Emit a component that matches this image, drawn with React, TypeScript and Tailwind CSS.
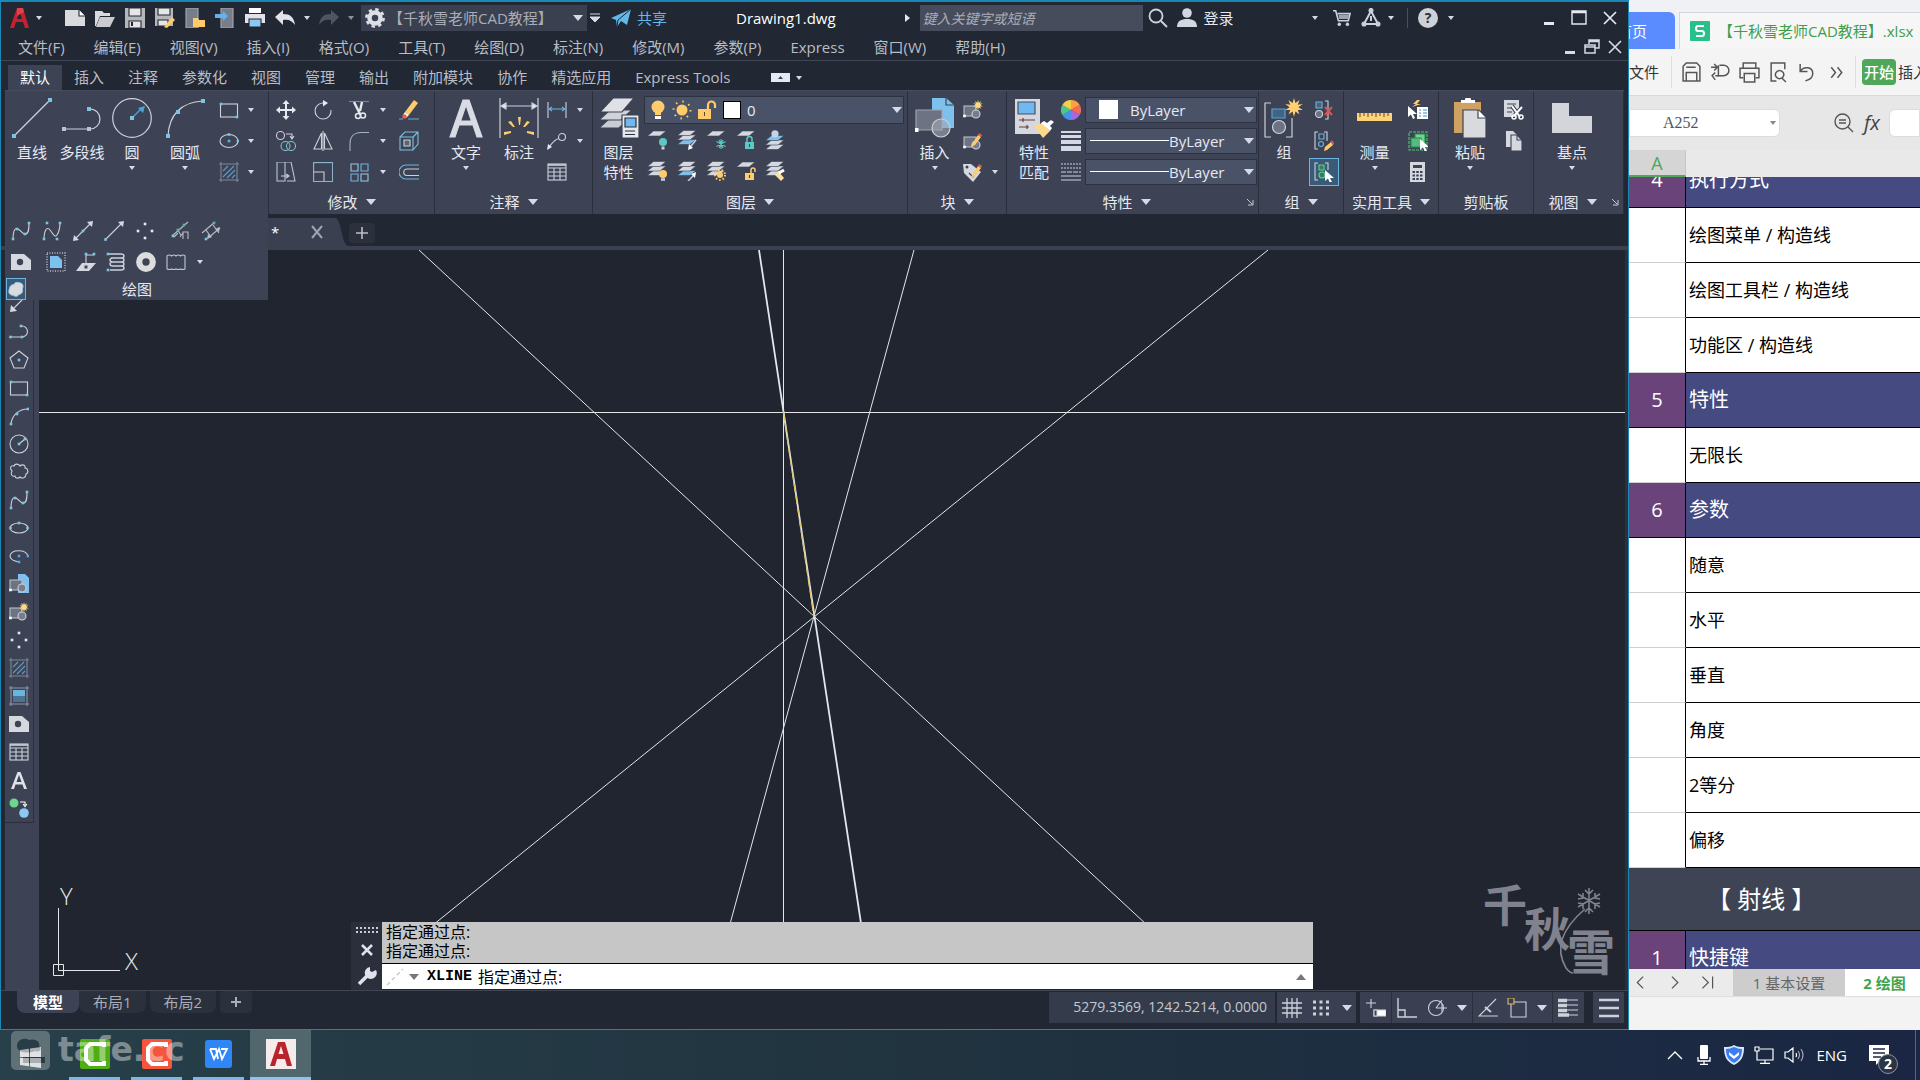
import type { ReactNode } from 'react';

interface IconProps {
    children: ReactNode;
    size?: number;
}

// Small toolbar icon, drawn on a 20 unit grid
function Icon({ children, size = 20 }: IconProps) {
    return (
        <svg width={size} height={size} viewBox="0 0 20 20" fill="none" stroke="#cdd1db" strokeWidth="1.1" className="shrink-0">
            {children}
        </svg>
    );
}

// Large ribbon icon, drawn on a 40 unit grid
function BigIcon({ children }: { children: ReactNode }) {
    return (
        <svg width="40" height="40" viewBox="0 0 40 40" fill="none" stroke="#cdd1db" strokeWidth="1.2" className="shrink-0">
            {children}
        </svg>
    );
}

function Caret({ wide = false }: { wide?: boolean }) {
    return wide ? (
        <svg width="10" height="6" viewBox="0 0 10 6" className="shrink-0">
            <path d="M0 0h10L5 6z" fill="#d6dae6" />
        </svg>
    ) : (
        <svg width="8" height="4" viewBox="0 0 8 4" className="shrink-0">
            <path d="M1 0h6L4 4z" fill="#d6dae6" />
        </svg>
    );
}

function Dot({ x, y, c = '#7cc4e0', r = 1.3 }: { x: number; y: number; c?: string; r?: number }) {
    return <rect x={x - r} y={y - r} width={r * 2} height={r * 2} fill={c} stroke="none" />;
}

const SUN = 'M10 0l1.3 4.6L15 1.8l-1.6 4.4L18 5.5l-4 2.9L18 11l-4.6-.2L15 15l-3.7-2.7L10 17l-1.3-4.7L5 15l1.6-4.2L2 11l4-2.6-4-2.9 4.6.7L5 1.8l3.7 2.8z';
const CURSOR = 'M0 0v11l3-2.5L5 13l2-1-2-4h4z';

const pencil = (
    <g stroke="none">
        <path d="M9 13l6-9 3 2-6 8-4 2z" fill="#ffcb6b" />
        <path d="M15 4l1-2 3 2-1 2z" fill="#e8604c" />
    </g>
);

const blockBase = (
    <g>
        <rect x="1" y="6" width="12" height="10" fill="#6d7382" stroke="#b9bdc8" />
        <circle cx="13" cy="14" r="4" fill="#777d8c" />
        <Dot x={1.5} y={16} c="#fff" />
    </g>
);

const hatchBox = (
    <g>
        <path d="M2 0v20M18 0v20M0 2h20M0 18h20" stroke="#7f8696" />
        <path d="M4 9l5-5M4 15L15 4M8 16l8-8M13 16l3-3" stroke="#5c9dc6" />
    </g>
);

const sheet = (y: number, fill = '#d5d8de') => <path key={y} d={`M6.500 ${y}h12.500l-6 5H0.500z`} fill={fill} stroke="#3d4354" strokeWidth="0.6" />;

const stack = (bottom = '#d5d8de', top = '#d5d8de') => (
    <g>
        {sheet(9.5, bottom)}
        {sheet(5)}
        {sheet(0.5, top)}
    </g>
);

const lock = (color: string, open = false) => (
    <g>
        <rect x="9" y="12" width="9" height="7" fill={color} stroke="none" />
        <path d={open ? 'M15 12V9a2 2 0 0 1 4 0v2' : 'M11 12V9a2.500 2.500 0 0 1 5 0v3'} stroke={color} strokeWidth="1.5" />
        <path d="M13.500 14v3" stroke="#3d4354" />
    </g>
);

const icons = {
    rect: (
        <>
            <rect x="1.5" y="4" width="17" height="13" />
            <Dot x={2} y={4} />
            <Dot x={18} y={17} />
        </>
    ),
    ellipse: (
        <>
            <ellipse cx="10" cy="10" rx="9" ry="6.500" />
            <Dot x={10} y={10} c="#57b7d8" />
            <Dot x={10} y={3.5} />
            <Dot x={19} y={10} />
        </>
    ),
    hatch: hatchBox,
    move: <path d="M10 0l3.500 4H11v5h5V6.500L20 10l-4 3.500V11h-5v5h2.500L10 20l-3.500-4H9v-5H4v2.500L0 10l4-3.500V9h5V4H6.500z" fill="#e6e9f0" stroke="none" />,
    rotate: (
        <>
            <path d="M12 3.200A8 8 0 1 0 18 10" />
            <path d="M10 0l5 3-5 3.500z" fill="#e6e9f0" stroke="none" />
        </>
    ),
    trim: (
        <>
            <path d="M0 1.500h20" stroke="#7f8696" />
            <path d="M5 2l6 12M13 2L11 11" stroke="#e6e9f0" strokeWidth="2.4" />
            <circle cx="9" cy="16" r="2.500" stroke="#e6e9f0" strokeWidth="1.500" />
            <circle cx="14" cy="15.500" r="2.500" stroke="#e6e9f0" strokeWidth="1.500" />
        </>
    ),
    erase: (
        <>
            <path d="M6 12L15 0l4 3-9 12z" fill="#ffcb6b" stroke="none" />
            <path d="M6 12l-2 3 3 3 3-3z" fill="#fff" stroke="none" />
            <circle cx="5.500" cy="16.500" r="2.300" fill="#e8604c" stroke="none" />
            <path d="M0 19h4M9 19h11" stroke="#68aed6" />
        </>
    ),
    copy: (
        <>
            <circle cx="4.500" cy="4.500" r="4" />
            <circle cx="9.500" cy="15" r="4.500" stroke="#7cbfd0" />
            <circle cx="15" cy="15" r="4.500" stroke="#7cbfd0" />
            <path d="M10 3h6v4M14 5l2 3 2-3" />
        </>
    ),
    mirror: <path d="M8.500 2v16H1zM11.500 2v16H19zM10 0v20" />,
    fillet: <path d="M1 20v-7C1 5 6 1.500 12 1.500h8" stroke="#9fb5c4" />,
    box: (
        <>
            <path d="M1 6h13v13H1zM1 6l5-5h13v12l-5 6M14 6l5-5" stroke="#7cbfe0" />
            <path d="M5 9h6v6H5z" fill="#5a6474" />
        </>
    ),
    stretch: (
        <>
            <path d="M1 0h8v19H1zM9 0h6l4 19h-8" stroke="#b9c8d4" />
            <path d="M5 14h7M10 12l3 2-3 2" />
        </>
    ),
    scale: (
        <>
            <rect x="0.6" y="0.6" width="19" height="19" stroke="#8fb9cf" />
            <path d="M1 10h10v9" />
        </>
    ),
    array: (
        <>
            <path d="M2 2h7v7H2zM12 12h7v7h-7z" stroke="#9cc8dc" />
            <path d="M12 2h7v7h-7zM2 12h7v7H2z" stroke="#6cb4e0" />
        </>
    ),
    offset: (
        <>
            <path d="M20 3H7a7 7 0 0 0 0 14h13" stroke="#6cb4e0" />
            <path d="M20 7H8a3 3 0 0 0 0 6.500h12" />
        </>
    ),
    dimLinear: (
        <>
            <path d="M1 2v16M19 2v16" />
            <path d="M2 9h16M5 7L2 9l3 2M15 7l3 2-3 2" stroke="#6cb4e0" />
        </>
    ),
    leader: (
        <>
            <circle cx="15" cy="6" r="3.500" />
            <path d="M12 7.500C8 8 6 11 2 16" />
            <path d="M0 19l1-6 4 3z" fill="#e6e9f0" stroke="none" />
        </>
    ),
    table: (
        <>
            <rect x="1" y="2" width="18" height="16" />
            <path d="M1 6h18M1 10h18M1 14h18M7 6v12M13 6v12" />
            <path d="M1 3h18" strokeWidth="1.600" />
        </>
    ),
    layerOff: (
        <>
            {sheet(1)}
            <circle cx="16" cy="12" r="4" fill="#5cc8c4" stroke="none" />
            <path d="M14.500 18h3" strokeWidth="3" />
        </>
    ),
    layerIso: (
        <>
            {stack('#7fc1ee')}
            <path d="M19 10l-5 6" strokeWidth="1.500" />
            <path d="M11 20l1-6 4 4z" fill="#fff" stroke="none" />
        </>
    ),
    layerFreeze: (
        <>
            {sheet(1)}
            <path d="M15 9v10M10.500 11.500l9 5M19.500 11.500l-9 5M13 10l4 8M17 10l-4 8" stroke="#5cc8c4" />
        </>
    ),
    layerLock: (
        <>
            {sheet(1)}
            {lock('#5cc8c4')}
        </>
    ),
    layerCurrent: (
        <>
            {sheet(14.5)}
            {sheet(10)}
            {sheet(5.5, '#7fc1ee')}
            <circle cx="10" cy="3.800" r="3.600" fill="#c3d2e4" stroke="none" />
        </>
    ),
    layerOn: (
        <>
            {stack()}
            <circle cx="16" cy="13" r="4" fill="#ffcb6b" stroke="none" />
            <path d="M14 18.500h4" strokeWidth="2.500" />
        </>
    ),
    layerUniso: (
        <>
            {stack('#7fc1ee')}
            <path d="M11 20l7-7" strokeWidth="1.500" />
            <path d="M19 11l-1 6-4-4z" fill="#fff" stroke="none" />
        </>
    ),
    layerThaw: (
        <>
            {stack()}
            <circle cx="14" cy="14" r="3" fill="#ffcb6b" stroke="none" />
            <circle cx="14" cy="14" r="5" stroke="#ffcb6b" strokeWidth="2" strokeDasharray="1.500 2" />
        </>
    ),
    layerUnlock: (
        <>
            {sheet(1)}
            {lock('#ffcb6b', true)}
        </>
    ),
    layerMatch: (
        <>
            {stack()}
            <path d="M10 14l4-3 5 6-3 3z" fill="#ffe0a0" stroke="none" />
            <path d="M14 12l5-3" stroke="#fff" strokeWidth="3" />
        </>
    ),
    blockNew: (
        <>
            {blockBase}
            <g transform="translate(9 0) scale(.6)">
                <path d={SUN} fill="#ffd980" stroke="none" />
            </g>
        </>
    ),
    blockEdit: (
        <>
            {blockBase}
            {pencil}
        </>
    ),
    attr: (
        <>
            <path d="M0 2l8 0 10 8-8 10L1 11z" fill="#d5d8de" stroke="none" />
            <circle cx="4" cy="5" r="1.500" fill="#3d4354" stroke="none" />
            <path d="M6 11l4 4 4-6" stroke="#3d4354" />
            {pencil}
        </>
    ),
    lineWeight: (
        <g stroke="none" fill="#d5d8e4">
            <rect y="0" width="20" height="2" />
            <rect y="4" width="20" height="3" />
            <rect y="9" width="20" height="4" />
            <rect y="15" width="20" height="5" />
        </g>
    ),
    lineType: (
        <g>
            <path d="M0 2h20M0 6h20" strokeDasharray="2 1" />
            <path d="M0 10h20" strokeDasharray="5 1" />
            <path d="M0 14h20M0 18h20" />
        </g>
    ),
    ungroup: (
        <>
            <path d="M2 2h6v6H2z" stroke="#6cb4e0" fill="#47627a" />
            <circle cx="5" cy="14" r="3.500" fill="#6d7382" />
            <path d="M11 1h3v18h-3" />
            <path d="M11 7l7 8M18 7l-7 8" stroke="#e05252" strokeWidth="2" />
        </>
    ),
    groupEdit: (
        <>
            <path d="M4 1H1v17h3M10 1h3v9" />
            <path d="M5 3h5v5H5z" stroke="#6cb4e0" />
            <circle cx="7" cy="13" r="2.500" stroke="#6cb4e0" />
            <path d="M10 20l1-4 6-5 2 3-6 5z" fill="#ffcb6b" stroke="none" />
            <path d="M17 10l3 3" stroke="#e05252" strokeWidth="2" />
        </>
    ),
    groupSelect: (
        <>
            <path d="M4 1H1v17h3M11 1h3v7" />
            <path d="M5 3h5v5H5z" stroke="#5fd08c" fill="#3b7a5a" />
            <circle cx="8" cy="13" r="3" stroke="#5fd08c" fill="#3b7a5a" />
            <path d={CURSOR} transform="translate(11 8)" fill="#fff" stroke="none" />
        </>
    ),
    quickSelect: (
        <>
            <path d="M9 7h11v12H9z" fill="#fff" stroke="none" />
            <path d="M11 10h2M15 10h4M11 13h2M15 13h4M11 16h2M15 16h4" stroke="#3d8fd0" />
            <path d="M9 0L5 4h3L4 7l9-3h-4l3-4z" fill="#ffcb6b" stroke="none" />
            <path d={CURSOR} transform="translate(0 6)" fill="#fff" stroke="none" />
        </>
    ),
    selectAll: (
        <>
            <rect x="1" y="1" width="18" height="18" stroke="#4cc878" strokeDasharray="3 1" />
            <path d="M7 3h10v9H7z" fill="#6fd48f" stroke="#2e8a54" />
            <path d="M3 7h10v9H3z" fill="#55bd7a" stroke="#2e8a54" />
            <path d={CURSOR} transform="translate(12 8)" fill="#fff" stroke="none" />
        </>
    ),
    calc: (
        <>
            <rect x="2" y="0" width="15" height="20" fill="#d5d8de" stroke="none" />
            <rect x="5" y="3" width="9" height="3" fill="#3d4354" stroke="none" />
            <path d="M4.500 10h10M4.500 13.500h10M4.500 17h10" stroke="#3d4354" strokeWidth="2" strokeDasharray="2.500 1.250" />
        </>
    ),
    cut: (
        <>
            <path d="M0 0h15v17H0z" fill="#d5d8de" stroke="none" />
            <path d="M3 4h9M3 8h5M3 12h5" stroke="#3d4354" />
            <path d="M8 6l8 11M18 7L10 16" stroke="#3d4354" strokeWidth="4" />
            <path d="M8 6l8 11M18 7L10 16" stroke="#fff" strokeWidth="2" />
            <circle cx="10" cy="17" r="2" stroke="#fff" strokeWidth="1.500" />
            <circle cx="17" cy="17" r="2" stroke="#fff" strokeWidth="1.500" />
        </>
    ),
    copyClip: (
        <>
            <path d="M2 0h7l4 4v12H2z" fill="#d5d8de" stroke="none" />
            <path d="M7 4h6l5 5v11H7z" fill="#d5d8de" stroke="#3d4354" />
            <path d="M13 4v5h5" stroke="#3d4354" />
        </>
    ),
    spline: (
        <>
            <path d="M2 19C2 12 3 6 7 8s5 6 8 5 3-6 3-12" />
            <Dot x={2} y={18} />
            <Dot x={6} y={8} />
            <Dot x={14} y={13} />
            <Dot x={18} y={2} />
        </>
    ),
    splineCv: (
        <>
            <path d="M2 19C2 9 5 5 8 9s5 8 7 5 3-8 3-13" />
            <Dot x={2} y={18} />
            <Dot x={5} y={2} />
            <Dot x={15} y={18} />
            <Dot x={18} y={2} />
        </>
    ),
    xline: (
        <>
            <path d="M2 18L18 2" />
            <path d="M0 20l1-6 5 5zM20 0l-1 6-5-5z" fill="#d5d8e0" stroke="none" />
            <Dot x={10} y={10} />
        </>
    ),
    ray: (
        <>
            <path d="M1 19L17 3" />
            <path d="M20 0l-1 6-5-5z" fill="#d5d8e0" stroke="none" />
            <Dot x={1.5} y={18.5} />
        </>
    ),
    points: (
        <>
            <Dot x={10} y={3} c="#e6e9f0" />
            <Dot x={3} y={10} c="#e6e9f0" />
            <Dot x={17} y={10} c="#e6e9f0" />
            <Dot x={10} y={17} c="#e6e9f0" />
        </>
    ),
    divide: (
        <>
            <path d="M1 15L17 1M6 8l4 6M3 16l4-4M12 18v-7h5v7M9 16l3-4" stroke="#b9bdc8" />
            <Dot x={7} y={9} c="#4fb3a8" />
            <Dot x={13} y={4} c="#4fb3a8" />
            <Dot x={2} y={15} />
        </>
    ),
    measure: (
        <>
            <path d="M1 12L14 1M7 17L19 7M5 9l5 7M12 4l6 8" stroke="#b9bdc8" />
            <path d="M6 18l1-5 4 3zM19 6l-1 5-4-3z" fill="#b9bdc8" stroke="none" />
            <Dot x={5} y={18} />
            <Dot x={13} y={2} c="#4fb3a8" />
        </>
    ),
    region: (
        <>
            <path d="M0 2h13l7 6v10H0z" fill="#d5d8de" stroke="none" />
            <circle cx="9" cy="10" r="3.200" fill="#3d4354" stroke="none" />
        </>
    ),
    wipeout: (
        <>
            <rect x="1" y="1" width="18" height="18" strokeWidth="2" strokeDasharray="1 1.500" stroke="#9aa0ae" />
            <path d="M4 4h8l4 4v8H4z" fill="#7fc1ee" stroke="none" />
        </>
    ),
    plane: (
        <>
            <path d="M6 11h14l-7 8H0z" fill="#d5d8de" stroke="none" />
            <path d="M10 15V3h8" />
            <Dot x={10} y={2} />
            <Dot x={18} y={2} />
            <rect x="8" y="13" width="4" height="4" fill="#3d4354" />
        </>
    ),
    helix: (
        <>
            <g strokeWidth="1.400">
                <path d="M3 2h12c4 0 4 4 0 4H5M7 6c-4 0-4 4 0 4M5 6h10c4 0 4 4 0 4H6M7 10c-4 0-4 4 0 4M6 10h9c4 0 4 4 0 4H7M4 18h11c4 0 4-4 0-4" />
            </g>
            <Dot x={2} y={2} />
            <Dot x={2} y={18} />
        </>
    ),
    donut: <circle cx="10" cy="10" r="6.800" stroke="#dcdcdc" strokeWidth="6.200" />,
    cloudRect: <path d="M1 4q2.500-2 4.500 0 2.500-2 4.500 0 2.500-2 4.500 0 2.500-2 4.500 0v13q-2 1-4.500 0-2 1-4.500 0-2 1-4.500 0-2 1-4.500 0z" stroke="#b9c8d4" />,
    blob: <path d="M3 9c-2 4-1 8 4 8 2 2 6 1 6-1 4 0 5-4 4-6 2-4 0-7-4-7-2-1-5 0-5 2-3 0-5 2-5 4z" fill="#d9dbe0" stroke="#a9c4d8" />,
    lineSeg: (
        <>
            <path d="M17 2L4 15" />
            <path d="M1 18l1-7 6 6z" fill="#d5d8e0" stroke="none" />
            <Dot x={18} y={1.5} />
        </>
    ),
    pline: (
        <>
            <path d="M1 15h12a5 5 0 0 0 0-11" />
            <Dot x={1.5} y={15} />
            <Dot x={13} y={15} />
            <Dot x={12} y={4} />
        </>
    ),
    polygon: (
        <>
            <path d="M10 1l9 7-4 10H5L1 8z" />
            <Dot x={10} y={10} />
        </>
    ),
    arc: (
        <>
            <path d="M2 18C3 9 10 3 19 3" />
            <Dot x={2} y={18} />
            <Dot x={8} y={8} />
            <Dot x={19} y={3} />
        </>
    ),
    circle: (
        <>
            <circle cx="10" cy="10" r="9" />
            <path d="M10 10l6-5" />
            <Dot x={10} y={10} />
            <Dot x={16} y={5} />
        </>
    ),
    cloud: <path d="M3 9C0 6 2 3 5 4c1-3 5-2 6 0 2-2 6-1 5 2 3 0 4 5 1 6 0 4-4 5-6 3-2 2-5 1-5-1-3 1-5-2-3-5z" />,
    ellipseSmall: (
        <>
            <ellipse cx="10" cy="10" rx="9" ry="5" />
            <Dot x={1.5} y={10} />
            <Dot x={18.5} y={10} />
            <Dot x={10} y={5} />
        </>
    ),
    ellipseArc: (
        <>
            <path d="M10 16C4 15 1 13 1 10c1-7 16-7 18 0" />
            <Dot x={10} y={10} c="#4ba7e8" />
            <Dot x={19} y={10} c="#4ba7e8" />
            <Dot x={10} y={16} c="#4ba7e8" />
        </>
    ),
    insert: (
        <>
            <path d="M9 0h7l4 4v15H9z" fill="#7fc1ee" stroke="none" />
            {blockBase}
        </>
    ),
    gradient: (
        <>
            <path d="M2 0v20M18 0v20M0 2h20M0 18h20" stroke="#8e95a5" />
            <path d="M4 4h12v6H4z" fill="#6cb4e0" stroke="none" />
            <path d="M4 10h12v6H4z" fill="#4a7592" stroke="none" />
        </>
    ),
    addSel: (
        <>
            <circle cx="5" cy="5" r="4.500" fill="#6fd48f" stroke="none" />
            <circle cx="15" cy="15" r="4.800" fill="#8cc8f4" stroke="none" />
            <path d="M11 4h5v3M14 6l2 2.500L18 6" stroke="#fff" />
        </>
    ),
};

type IconName = keyof typeof icons;

function Tool({ name, label, active = false }: { name: IconName; label?: string; active?: boolean }) {
    return (
        <button
            aria-label={label ?? name}
            className={
                active
                    ? 'flex h-[28px] w-[30px] items-center justify-center border border-[#6cb4e0] bg-[#3a5b78]'
                    : 'flex h-5 w-5 items-center justify-center'
            }
        >
            <Icon>{icons[name]}</Icon>
        </button>
    );
}

function BigTool({ label, second, caret, width, children }: { label: string; second?: string; caret?: boolean; width: string; children: ReactNode }) {
    return (
        <button className={`flex shrink-0 flex-col items-center pt-[7px] ${width}`}>
            <BigIcon>{children}</BigIcon>
            <span className="mt-1 whitespace-nowrap leading-5">{label}</span>
            {second && <span className="whitespace-nowrap leading-5">{second}</span>}
            {caret && (
                <span className="mt-1">
                    <Caret />
                </span>
            )}
        </button>
    );
}

function Panel({ title, width, caret = true, launcher, children }: { title: string; width: string; caret?: boolean; launcher?: boolean; children: ReactNode }) {
    return (
        <section className={`flex flex-col border-r border-[#2a2f3b] ${width}`}>
            <div className="flex h-[100px]">{children}</div>
            <div className="flex h-6 items-center justify-center">
                <span className="flex grow items-center justify-center gap-2">
                    {title}
                    {caret && <Caret wide />}
                </span>
                {launcher && (
                    <svg width="8" height="8" viewBox="0 0 8 8" className="mr-1 shrink-0">
                        <path d="M1 1l5 5M7 2v5H2" stroke="#c8ccd6" fill="none" />
                    </svg>
                )}
            </div>
        </section>
    );
}

function TitleBar() {
    return (
        <header className="flex h-8 shrink-0 items-center pl-[9px] pr-[11px]">
            <svg width="20" height="22" viewBox="0 0 20 22">
                <path d="M0 21L7 1h6l6 20h-4l-2-6H6l-2 6zM7 12h5L9.500 4z" fill="#c8202f" />
                <path d="M7 1h6l1 4-7 4z" fill="#e2404a" />
            </svg>
            <span className="ml-[5px]">
                <Caret />
            </span>
            <div className="ml-[22px] flex items-center gap-[10px]">
                <Icon>
                    <path d="M0 2h14l6 6v10H0z" fill="#d9dade" stroke="none" />
                    <path d="M14 2v6h6" fill="#fff" stroke="#212733" />
                </Icon>
                <Icon>
                    <path d="M0 3h7l2 2h6v3H5L1 18H0z" fill="#d9dade" stroke="none" />
                    <path d="M5 9h15l-5 10H1z" fill="#c9cbd0" stroke="none" />
                </Icon>
                <Icon>
                    <path d="M0 0h20v20H0z" fill="#b5b7bb" stroke="none" />
                    <path d="M4 0h12v8H4zM4 13h12v7H4z" fill="#e6e6e6" stroke="#212733" />
                    <path d="M7 14v4" strokeWidth="2" stroke="#212733" />
                </Icon>
                <Icon>
                    <path d="M0 0h18v18H0z" fill="#b5b7bb" stroke="none" />
                    <path d="M3 0h12v7H3zM3 12h10v6H3z" fill="#e6e6e6" stroke="#212733" />
                    <path d="M9 19l8-10 3 3-8 8z" fill="#ffcb6b" stroke="none" />
                </Icon>
                <Icon>
                    <path d="M1 0h12v20H1z" fill="#777d8a" stroke="#a5a9b3" />
                    <path d="M8 10h5l1 2h6v7H8z" fill="#ffcb6b" stroke="none" />
                </Icon>
                <Icon>
                    <path d="M6 0h12v20H6z" fill="#777d8a" stroke="#a5a9b3" />
                    <path d="M0 6h8V3l5 5-5 5v-3H0z" fill="#5db4f0" stroke="none" />
                </Icon>
                <Icon>
                    <path d="M4 0h12v5H4z" fill="#fff" stroke="none" />
                    <path d="M0 6h20v9H0z" fill="#e1e3e8" stroke="none" />
                    <path d="M4 11h12v8H4z" fill="#8cc8f4" stroke="#212733" />
                </Icon>
                <Icon>
                    <path d="M0 9l8-7v4c7 0 11 3 12 11-3-4-6-6-12-5v5z" fill="#e1e3e8" stroke="none" />
                </Icon>
            </div>
            <span className="ml-2">
                <Caret />
            </span>
            <span className="ml-2">
                <Icon>
                    <path d="M20 9l-8-7v4C5 6 1 9 0 17c3-4 6-6 12-5v5z" fill="#50555f" stroke="none" />
                </Icon>
            </span>
            <span className="ml-2 opacity-60">
                <Caret />
            </span>
            <label className="ml-[6px] flex h-[26px] w-[226px] items-center bg-[#3a4050] pl-1 pr-1">
                <Icon>
                    <circle cx="10" cy="10" r="5.500" strokeWidth="4.500" stroke="#dcdfe6" />
                    <circle cx="10" cy="10" r="8.600" strokeWidth="2.600" stroke="#dcdfe6" strokeDasharray="3.400 3.350" />
                </Icon>
                <select aria-label="工作空间" className="ml-[3px] grow appearance-none bg-transparent text-[#a9adb8] outline-none">
                    <option>【千秋雪老师CAD教程】</option>
                </select>
                <Caret wide />
            </label>
            <svg width="10" height="10" viewBox="0 0 10 10" className="ml-[3px]">
                <path d="M0 1h10M0 4h10L5 9z" stroke="#d6dae6" fill="#d6dae6" />
            </svg>
            <button className="ml-[11px] flex items-center gap-[6px] text-[#63b8ea]">
                <svg width="20" height="18" viewBox="0 0 20 18">
                    <path d="M0 9L20 0l-4 16-6-4-4 6-1-7z" fill="#63b8ea" />
                    <path d="M20 0L7 11l-1 7" stroke="#212733" fill="none" />
                </svg>
                共享
            </button>
            <span className="ml-[69px] text-white">Drawing1.dwg</span>
            <svg width="6" height="8" viewBox="0 0 6 8" className="ml-[69px]">
                <path d="M0 0l5 4-5 4z" fill="#e6e9f0" />
            </svg>
            <input
                aria-label="搜索"
                placeholder="键入关键字或短语"
                className="ml-[9px] h-[26px] w-[223px] bg-[#464c5c] px-[3px] text-[14px] italic outline-none placeholder:text-[#a9adb8]"
            />
            <span className="ml-[5px]">
                <Icon>
                    <circle cx="8" cy="8" r="6.500" strokeWidth="1.800" />
                    <path d="M13 13l6 6" strokeWidth="2" />
                </Icon>
            </span>
            <span className="ml-[9px]">
                <Icon>
                    <circle cx="10" cy="5" r="4.800" fill="#d3d7e0" stroke="none" />
                    <path d="M0 19c0-6 4-8 10-8s10 2 10 8z" fill="#d3d7e0" stroke="none" />
                </Icon>
            </span>
            <button className="ml-[7px] text-[#e6e9f0]">登录</button>
            <div className="ml-auto flex items-center">
                <Caret />
                <span className="ml-[14px]">
                    <Icon size={18}>
                        <path d="M0 2h3l3 11h11l2-8H5" strokeWidth="1.800" />
                        <path d="M6 6h12l-1 5H7z" fill="#9ea3b0" stroke="none" />
                        <circle cx="7" cy="17" r="1.500" fill="#cdd1db" />
                        <circle cx="16" cy="17" r="1.500" fill="#cdd1db" />
                    </Icon>
                </span>
                <span className="ml-[10px]">
                    <Icon>
                        <path d="M10 3L3 16h14zM10 8v5" strokeWidth="2" />
                        <circle cx="10" cy="2.500" r="2" fill="#cdd1db" />
                        <circle cx="3" cy="16" r="2" fill="#cdd1db" />
                        <circle cx="17" cy="16" r="2" fill="#cdd1db" />
                    </Icon>
                </span>
                <span className="ml-[6px]">
                    <Caret />
                </span>
                <span className="ml-3 h-5 w-px bg-[#4a5060]" />
                <span className="ml-[10px] flex h-5 w-5 items-center justify-center rounded-full bg-[#cdd1d8] text-sm font-bold text-[#2a2f3b]">?</span>
                <span className="ml-[9px]">
                    <Caret />
                </span>
                <div className="ml-[88px] flex items-center gap-4">
                    <button aria-label="最小化">
                        <svg width="12" height="14" viewBox="0 0 12 14">
                            <path d="M1 11h10v3H1z" fill="#e6e9f0" />
                        </svg>
                    </button>
                    <button aria-label="最大化">
                        <svg width="16" height="16" viewBox="0 0 16 16" fill="none" stroke="#e6e9f0">
                            <path d="M1 1h14v13H1zM1 2.500h14" strokeWidth="1.400" />
                        </svg>
                    </button>
                    <button aria-label="关闭">
                        <svg width="14" height="14" viewBox="0 0 14 14" stroke="#e6e9f0" strokeWidth="1.700">
                            <path d="M1 1l12 12M13 1L1 13" />
                        </svg>
                    </button>
                </div>
            </div>
        </header>
    );
}

const MENUS = ['文件(F)', '编辑(E)', '视图(V)', '插入(I)', '格式(O)', '工具(T)', '绘图(D)', '标注(N)', '修改(M)', '参数(P)', 'Express', '窗口(W)', '帮助(H)'];

const TABS = ['默认', '插入', '注释', '参数化', '视图', '管理', '输出', '附加模块', '协作', '精选应用', 'Express Tools'];

function MenuBar() {
    return (
        <nav className="flex h-[27px] shrink-0 items-center gap-[29px] border-b border-[#3f4552] pl-[17px] pr-[6px] text-[#b9bdc6]">
            {MENUS.map((m) => (
                <button key={m} className="whitespace-nowrap">
                    {m}
                </button>
            ))}
            <div className="ml-auto flex items-center gap-[8px]">
                <svg width="12" height="14" viewBox="0 0 12 14">
                    <path d="M1 11h10v3H1z" fill="#d6dae6" />
                </svg>
                <svg width="16" height="16" viewBox="0 0 16 16" fill="none" stroke="#d6dae6" strokeWidth="1.500">
                    <path d="M5 5V1h10v8h-4M1 6h10v8H1zM1 8h10M5 2.500h10" />
                </svg>
                <svg width="14" height="14" viewBox="0 0 14 14" stroke="#d6dae6" strokeWidth="1.700">
                    <path d="M1 1l12 12M13 1L1 13" />
                </svg>
            </div>
        </nav>
    );
}

function RibbonTabs() {
    return (
        <div className="flex h-[29px] shrink-0 items-end pl-[7px] text-[#b9bdc6]">
            {TABS.map((t, i) => (
                <button key={t} className={i === 0 ? 'h-[25px] whitespace-nowrap bg-[#3d4354] px-3 pb-[2px] text-white' : 'h-[25px] whitespace-nowrap px-3 pb-[2px]'}>
                    {t}
                </button>
            ))}
            <span className="ml-[28px] flex h-[25px] items-center gap-[5px]">
                <svg width="19" height="9" viewBox="0 0 19 9">
                    <rect width="19" height="9" fill="#e6e9f2" />
                    <path d="M7 6h5L9.500 3z" fill="#3d4354" />
                </svg>
                <Caret />
            </span>
        </div>
    );
}

// The draw panel is pinned open, so its extra rows hang below the ribbon
function DrawPanel() {
    return (
        <section className="relative flex w-[264px] border-r border-[#2a2f3b] pl-[2px]">
            <BigTool label="直线" width="w-[50px]">
                <path d="M2 38L38 2" />
                <Dot x={2} y={38} r={2} />
                <Dot x={38} y={2} r={2} />
            </BigTool>
            <BigTool label="多段线" width="w-[50px]">
                <path d="M2 31h26a10 10 0 0 0 0-20" />
                <Dot x={2} y={31} r={2} c="#b9c4d0" />
                <Dot x={27} y={31} r={2} c="#b9c4d0" />
                <Dot x={27} y={11} r={2} />
            </BigTool>
            <BigTool label="圆" caret width="w-[50px]">
                <circle cx="20" cy="20" r="19.300" />
                <path d="M20 20l9-9" stroke="#4fa3d8" />
                <path d="M33 8l-2 7-5-5z" fill="#4fa3d8" stroke="none" />
                <Dot x={20} y={20} r={2} />
            </BigTool>
            <BigTool label="圆弧" caret width="w-[56px]">
                <path d="M3 38C4 17 16 4 38 3" />
                <Dot x={3} y={38} r={2} />
                <Dot x={13} y={14} r={2} />
                <Dot x={38} y={3} r={2} />
            </BigTool>
            <div className="grid h-24 grid-cols-[28px_8px] grid-rows-3 items-center pl-[6px] pt-[3px]">
                <Tool name="rect" label="矩形" />
                <Caret />
                <Tool name="ellipse" label="椭圆" />
                <Caret />
                <Tool name="hatch" label="图案填充" />
                <Caret />
            </div>
            <div className="absolute left-0 top-full z-10 w-[263px] bg-[#3d4354] pt-px">
                <div className="flex h-[31px] items-center pl-[6px]">
                    <div className="flex gap-[11px]">
                        <Tool name="spline" />
                        <Tool name="splineCv" />
                        <Tool name="xline" />
                        <Tool name="ray" />
                        <Tool name="points" />
                    </div>
                    <div className="ml-4 flex gap-[10px]">
                        <Tool name="divide" />
                        <Tool name="measure" />
                    </div>
                </div>
                <div className="flex h-8 items-center gap-[10px] pl-[6px]">
                    <span className="mr-[5px]">
                        <Tool name="region" />
                    </span>
                    <Tool name="wipeout" />
                    <Tool name="plane" />
                    <Tool name="helix" />
                    <Tool name="donut" />
                    <Tool name="cloudRect" />
                    <Caret />
                </div>
                <div className="flex h-[22px] items-center">
                    <button aria-label="修订云线" className="ml-px flex h-[22px] w-5 items-center justify-center border border-[#6cb4e0] bg-[#3a5b78]">
                        <Icon size={18}>{icons.blob}</Icon>
                    </button>
                    <span className="grow pr-[20px] text-center leading-5">绘图</span>
                </div>
            </div>
        </section>
    );
}

const MODIFY: IconName[][] = [
    ['move', 'rotate', 'trim', 'erase'],
    ['copy', 'mirror', 'fillet', 'box'],
    ['stretch', 'scale', 'array', 'offset'],
];

const LAYER_TOOLS: IconName[] = ['layerOff', 'layerIso', 'layerFreeze', 'layerLock', 'layerCurrent', 'layerOn', 'layerUniso', 'layerThaw', 'layerUnlock', 'layerMatch'];

function PropSelect({ label, swatch }: { label: string; swatch?: boolean }) {
    return (
        <div className="flex h-[26px] items-center border border-[#2c3240] bg-[#4a5268] pl-1 pr-[2px]">
            {swatch ? <span className="ml-[9px] mr-3 h-[19px] w-[19px] shrink-0 bg-white" /> : <span className="h-px w-[79px] shrink-0 bg-white" />}
            <select aria-label={label} className="w-0 grow appearance-none bg-transparent outline-none">
                <option>ByLayer</option>
            </select>
            <Caret wide />
        </div>
    );
}

function Ribbon() {
    return (
        <div className="ml-1 mr-1 flex h-[124px] shrink-0 border-t border-[#464c5b] bg-[#3d4354] text-[#e6e9f2]">
            <DrawPanel />

            <Panel title="修改" width="w-[166px]">
                <div className="grid h-24 grid-cols-[37px_36px_30px_20px_20px] grid-rows-3 items-center pl-[7px] pt-[3px]">
                    {MODIFY.map(([a, b, c, d]) => (
                        <div key={a} className="contents">
                            <Tool name={a} />
                            <Tool name={b} />
                            <Tool name={c} />
                            <Caret />
                            <Tool name={d} />
                        </div>
                    ))}
                </div>
            </Panel>

            <Panel title="注释" width="w-[158px]">
                <div className="w-1" />
                <BigTool label="文字" caret width="w-[54px]">
                    <path d="M4 39L17 2h6l13 37h-5l-4-12H13L9 39zM14.500 23h11L20 7z" fill="#d9dce4" stroke="#d9dce4" />
                </BigTool>
                <BigTool label="标注" width="w-[52px]">
                    <path d="M1 0v40M39 0v40M2 8h36" />
                    <path d="M2 8l5-3v6zM38 8l-5-3v6z" fill="#e6e9f0" />
                    <path d="M19 19h3l-1 8h-1zM9 24l3-1 4 6h-2zM31 24l-3-1-4 6h2zM5 34l7-1v2l-7 2zM35 34l-7-1v2l7 2z" fill="#ffcb6b" stroke="none" />
                </BigTool>
                <div className="grid h-24 grid-cols-[29px_8px] grid-rows-3 items-center pl-[2px] pt-[3px]">
                    <Tool name="dimLinear" />
                    <Caret />
                    <Tool name="leader" />
                    <Caret />
                    <Tool name="table" />
                </div>
            </Panel>

            <Panel title="图层" width="w-[315px]">
                <BigTool label="图层" second="特性" width="w-[51px]">
                    <path d="M11 20h20L20 30H0z" fill="#c9ccd4" stroke="#3d4354" />
                    <path d="M11 12h22L22 22H0z" fill="#d0d3da" stroke="#3d4354" />
                    <path d="M14 0h21L23 14H1z" fill="#dfe1e6" stroke="#3d4354" />
                    <path d="M23 17h17v23H23z" fill="#e6e8ee" stroke="#3d4354" />
                    <path d="M26 20h11v9H26z" fill="#6fb8f0" stroke="#2a2f3b" />
                    <path d="M26 33h10M26 36.500h10" stroke="#2a2f3b" />
                </BigTool>
                <div className="flex grow flex-col pr-[3px] pt-[5px]">
                    <label className="flex h-[28px] items-center border border-[#2c3240] bg-[#4a5268] pl-[6px] pr-px">
                        <svg width="14" height="20" viewBox="0 0 14 20">
                            <circle cx="7" cy="7" r="6.500" fill="#ffcb6b" />
                            <path d="M4 12h6v3H4z" fill="#ffcb6b" />
                            <path d="M4 16h6v3H4z" fill="#fff" />
                        </svg>
                        <span className="ml-[7px]">
                            <Icon>
                                <circle cx="10" cy="10" r="5.500" fill="#ffcb6b" stroke="none" />
                                <circle cx="10" cy="10" r="8.500" stroke="#ffcb6b" strokeWidth="2" strokeDasharray="1.500 5.180" />
                            </Icon>
                        </span>
                        <svg width="20" height="20" viewBox="0 0 20 20" className="ml-[5px]">
                            <path d="M1 9h13v10H1z" fill="#ffcb6b" />
                            <path d="M11 9V5a3.500 3.500 0 0 1 7 0v3" stroke="#ffcb6b" strokeWidth="2.200" fill="none" />
                            <path d="M7.500 12v4" stroke="#5a4a2a" />
                        </svg>
                        <span className="ml-[6px] h-[18px] w-[18px] border border-black bg-white" />
                        <select aria-label="图层" className="ml-[6px] grow appearance-none bg-transparent outline-none">
                            <option>0</option>
                        </select>
                        <Caret wide />
                    </label>
                    <div className="grid w-[151px] grid-cols-5 grid-rows-[31px_31px] items-center pl-[3px]">
                        {LAYER_TOOLS.map((n) => (
                            <Tool key={n} name={n} />
                        ))}
                    </div>
                </div>
            </Panel>

            <Panel title="块" width="w-[99px]">
                <BigTool label="插入" caret width="w-[53px]">
                    <path d="M17 0h14l8 7v23H17z" fill="#7fc1ee" stroke="none" />
                    <path d="M31 0v7h8" stroke="#3d4354" />
                    <path d="M1 12h26v20H1z" fill="#6d7382" stroke="#9ea3b0" />
                    <circle cx="26" cy="30" r="9" fill="#a4a9b6" fillOpacity="0.6" />
                    <Dot x={1.5} y={32} c="#fff" r={2} />
                </BigTool>
                <div className="grid h-24 grid-cols-[28px_8px] grid-rows-3 items-center pl-[2px] pt-[3px]">
                    <Tool name="blockNew" />
                    <span />
                    <Tool name="blockEdit" />
                    <span />
                    <Tool name="attr" />
                    <Caret />
                </div>
            </Panel>

            <Panel title="特性" width="w-[252px]" launcher>
                <BigTool label="特性" second="匹配" width="w-[54px]">
                    <path d="M1 1h25v35H1z" fill="#d5d8de" stroke="none" />
                    <path d="M4 4h17v12H4z" fill="#6fb8f0" stroke="#4a5060" />
                    <path d="M5 22h16M5 29h10M9 20v4M13 27v4" stroke="#6b3a3a" />
                    <path d="M20 28l8-3 8 8-7 7z" fill="#ffd98a" stroke="none" />
                    <path d="M27 25l9 8 2-3-2-2 4-4-3-2-4 3-3-2z" fill="#fff" stroke="none" />
                </BigTool>
                <div className="grid h-24 grid-cols-[24px_172px] grid-rows-3 items-center pt-[3px]">
                    <svg width="20" height="20" viewBox="0 0 20 20">
                        <path d="M10 10V0a10 10 0 0 1 8.700 5z" fill="#ff9f40" />
                        <path d="M10 10l8.700-5a10 10 0 0 1 0 10z" fill="#f26a5a" />
                        <path d="M10 10l8.700 5a10 10 0 0 1-8.700 5z" fill="#a06ae0" />
                        <path d="M10 10v10a10 10 0 0 1-8.700-5z" fill="#4a8ff0" />
                        <path d="M10 10L1.300 15a10 10 0 0 1 0-10z" fill="#4cc88a" />
                        <path d="M10 10L1.300 5A10 10 0 0 1 10 0z" fill="#f2d04a" />
                    </svg>
                    <PropSelect label="颜色" swatch />
                    <Icon>{icons.lineWeight}</Icon>
                    <PropSelect label="线宽" />
                    <Icon>{icons.lineType}</Icon>
                    <PropSelect label="线型" />
                </div>
            </Panel>

            <Panel title="组" width="w-[85px]">
                <BigTool label="组" width="w-[50px]">
                    <path d="M7 5H1v34h6M22 39h6V20" />
                    <path d="M8 11h13v9H8z" fill="#3f6486" stroke="#5d9fd0" />
                    <circle cx="15" cy="29" r="6.500" fill="#6d7382" />
                    <path d={SUN} transform="translate(19 0) scale(1.1)" fill="#ffcf70" stroke="none" />
                </BigTool>
                <div className="grid h-24 grid-rows-3 items-center justify-items-center pt-[3px]">
                    <Tool name="ungroup" />
                    <Tool name="groupEdit" />
                    <Tool name="groupSelect" active />
                </div>
            </Panel>

            <Panel title="实用工具" width="w-[95px]">
                <BigTool label="测量" caret width="w-[61px]">
                    <path d="M2 15h35v8H2z" fill="#ffd27a" stroke="none" />
                    <path d="M5 15v4M9 15v3M13 15v4M17 15v3M21 15v4M25 15v3M29 15v4M33 15v3" stroke="#7a6030" />
                </BigTool>
                <div className="grid h-24 grid-rows-3 items-center pl-[3px] pt-[3px]">
                    <Tool name="quickSelect" />
                    <Tool name="selectAll" />
                    <Tool name="calc" />
                </div>
            </Panel>

            <Panel title="剪贴板" width="w-[95px]" caret={false}>
                <BigTool label="粘贴" caret width="w-[62px]">
                    <path d="M4 4h27v31H4z" fill="#cfa264" stroke="none" />
                    <path d="M11 5V2h4a3 3 0 0 1 6 0h4v3z" fill="#fff" stroke="none" />
                    <path d="M13 12h16l7 8v20H13z" fill="#d9dade" stroke="#3d4354" />
                    <path d="M28 12v8h8" stroke="#3d4354" fill="#fff" />
                </BigTool>
                <div className="grid h-24 grid-rows-3 items-center pl-[3px] pt-[3px]">
                    <Tool name="cut" />
                    <Tool name="copyClip" />
                </div>
            </Panel>

            <Panel title="视图" width="grow" launcher>
                <div className="w-2" />
                <BigTool label="基点" caret width="w-[60px]">
                    <path d="M0 5h17v13h23v17H0z" fill="#d3d5da" stroke="none" />
                </BigTool>
            </Panel>
        </div>
    );
}

function FileTabs() {
    return (
        <div className="flex h-9 shrink-0 items-end border-b-4 border-[#3a404f] pl-[266px] text-white">
            <div className="flex h-7 w-[68px] items-center bg-[#3a404f] pl-1">
                <span className="leading-5">*</span>
                <button aria-label="关闭图形" className="ml-[31px]">
                    <svg width="14" height="14" viewBox="0 0 14 14" stroke="#9ea3b0" strokeWidth="2">
                        <path d="M2 1l10 12M12 1L2 13" />
                    </svg>
                </button>
            </div>
            <svg width="14" height="28" viewBox="0 0 14 28">
                <path d="M0 0c7 0 6 28 14 28H0z" fill="#3a404f" />
            </svg>
            <button aria-label="新建图形" className="mb-[3px] flex h-[20px] w-[26px] items-center justify-center rounded bg-[#2b303c]">
                <svg width="12" height="12" viewBox="0 0 12 12" stroke="#b9bdc8" strokeWidth="1.600">
                    <path d="M6 0v12M0 6h12" />
                </svg>
            </button>
        </div>
    );
}

const SIDE_TOOLS: IconName[] = [
    'lineSeg', 'pline', 'polygon', 'rect', 'arc', 'circle', 'cloud', 'spline', 'ellipseSmall', 'ellipseArc',
    'insert', 'blockNew', 'points', 'hatch', 'gradient', 'region', 'table',
];

function SideToolbar() {
    return (
        <aside className="ml-1 w-[34px] shrink-0 bg-[#3d4354]">
            <div className="flex w-[29px] flex-col items-center gap-2 border-b border-r border-[#2a2f3b] pb-1 pt-[44px]">
                {SIDE_TOOLS.map((n) => (
                    <Tool key={n} name={n} />
                ))}
                <button aria-label="多行文字" className="h-5 w-5">
                    <Icon>
                        <path d="M2 19L8.500 2h3L18 19h-3l-1.500-4.500h-7L5 19zM7.500 12h5L10 5z" fill="#dfe2ea" stroke="none" />
                    </Icon>
                </button>
                <Tool name="addSel" />
            </div>
        </aside>
    );
}

function CommandLine() {
    return (
        <div className="absolute bottom-0 left-[312px] right-[312px] flex h-[68px] text-[16px] text-black">
            <div className="flex w-[31px] shrink-0 flex-col items-center justify-between bg-[#2b2f3b] pb-1 pt-[5px]">
                <svg width="22" height="7" viewBox="0 0 22 7" stroke="#c8ccd6" strokeWidth="2">
                    <path d="M0 1h22M0 5h22" strokeDasharray="2 2" />
                </svg>
                <svg width="12" height="12" viewBox="0 0 12 12" stroke="#dfe2ea" strokeWidth="2.500">
                    <path d="M1 1l10 10M11 1L1 11" />
                </svg>
                <svg width="20" height="20" viewBox="0 0 20 20">
                    <path d="M2 18L13 7" stroke="#dfe2ea" strokeWidth="3.500" />
                    <path d="M19 4l-4 2-2-1V1a6 6 0 1 0 6 3z" fill="#dfe2ea" />
                </svg>
            </div>
            <div className="flex grow flex-col bg-white">
                <div className="h-[41px] bg-[#c6c6c6] pl-1 pt-[1px]">
                    <p className="leading-[19px]">指定通过点:</p>
                    <p className="leading-[19px]">指定通过点:</p>
                </div>
                <div className="flex h-[26px] items-center border-t border-black pl-1 pr-[7px] pt-px">
                    <svg width="18" height="18" viewBox="0 0 18 18" stroke="#c9c9c9" strokeWidth="1.500">
                        <path d="M1 17L17 1" strokeDasharray="4 3" />
                    </svg>
                    <svg width="10" height="6" viewBox="0 0 10 6" className="ml-[5px]">
                        <path d="M0 0h10L5 6z" fill="#777" />
                    </svg>
                    <label htmlFor="cmd" className="ml-2 font-['Liberation_Mono'] text-[15px] font-bold">
                        XLINE
                    </label>
                    <input id="cmd" defaultValue="指定通过点:" className="ml-[6px] w-0 grow bg-transparent outline-none" />
                    <svg width="10" height="6" viewBox="0 0 10 6">
                        <path d="M0 6h10L5 0z" fill="#777" />
                    </svg>
                </div>
                <div className="h-px bg-[#212530]" />
            </div>
        </div>
    );
}

function Canvas() {
    return (
        <main className="relative min-w-0 grow overflow-hidden bg-[#212530]">
            <svg width="100%" height="100%" fill="none" stroke="#e4e6ea" strokeWidth="1">
                <path d="M0 162.500h4000M744.500 0v900" />
                <path d="M380 0l783 726M1229 0L368 696M875 0L685 696" />
                <path d="M720 0l108 713" strokeWidth="1.800" />
                <path d="M744.500 162L775 367" stroke="#e0c46a" strokeWidth="1.400" strokeDasharray="9 3" />
                <path d="M19.500 658v62.500H81M14.500 714.500h10v11h-10z" />
                <g fill="#e4e6ea" stroke="none" className="font-['Open_Sans'] text-[24px] font-light">
                    <text x="21" y="655">Y</text>
                    <text x="86" y="720">X</text>
                </g>
            </svg>
            <CommandLine />
            <svg width="132" height="106" viewBox="0 0 132 106" className="absolute bottom-2 right-[10px]" fill="#80838f">
                <g className="font-['Noto_Sans_CJK_SC'] font-bold">
                    <text x="0" y="46" fontSize="44">千</text>
                    <text x="41" y="70" fontSize="46">秋</text>
                    <text x="84" y="94" fontSize="48">雪</text>
                </g>
                <g stroke="#80838f" strokeWidth="1.600" fill="none">
                    <path d="M106 12v26M95 18l22 13M117 18L95 31M102 14l4 4 4-4M102 36l4-4 4 4M95 23l5-1v-5M117 27l-5 1v5M117 23l-5-1v-5M95 27l5 1v5" />
                    <path d="M102 33C82 50 70 70 83 92q4 5 7 5" />
                </g>
            </svg>
        </main>
    );
}

const LAYOUT_TABS = ['模型', '布局1', '布局2'];

function StatusBar() {
    return (
        <footer className="flex h-[39px] shrink-0 items-start border-t border-[#3f4552] pr-1">
            <div className="ml-4 flex h-[22px] items-center">
                {LAYOUT_TABS.map((t, i) => (
                    <button
                        key={t}
                        className={
                            i === 0
                                ? 'h-[22px] rounded-b-lg bg-[#3d4354] px-4 font-bold leading-[22px] text-white'
                                : 'mr-[4px] h-[22px] rounded-b-lg bg-[#2a303c] px-[14px] leading-[22px] text-[#a9adb8]'
                        }
                    >
                        {t}
                    </button>
                ))}
                <button aria-label="新建布局" className="flex h-[22px] w-8 items-center justify-center rounded bg-[#2a303c]">
                    <svg width="10" height="10" viewBox="0 0 10 10" stroke="#a9adb8" strokeWidth="2">
                        <path d="M5 0v10M0 5h10" />
                    </svg>
                </button>
            </div>
            <div className="ml-auto mt-[1px] flex h-[31px] items-center">
                <span className="flex h-full w-[226px] items-center justify-end bg-[#343c4c] pb-[2px] pr-2 text-sm text-[#c3c8d2]">5279.3569, 1242.5214, 0.0000</span>
                <div className="ml-[2px] flex h-full w-[79px] items-center bg-[#3a4051] pl-[5px]">
                    <Icon>
                        <path d="M5 0v20M10 0v20M15 0v20M0 5h20M0 10h20M0 15h20" strokeWidth="1.300" />
                    </Icon>
                    <svg width="16" height="16" viewBox="0 0 16 16" className="ml-[11px]" stroke="#cdd1db" strokeWidth="3">
                        <path d="M0 2h16M0 8h16M0 14h16" strokeDasharray="3 3.500" />
                    </svg>
                    <span className="ml-[13px]">
                        <Caret wide />
                    </span>
                </div>
                <div className="ml-1 flex h-full w-[224px] items-center bg-[#3a4051] pl-[6px]">
                    <Icon>
                        <path d="M5 1v9M0 5h10" />
                        <path d="M8 12h12v6H8z" fill="#fff" />
                        <path d="M8 12h3v6H8z" fill="#3d4354" />
                    </Icon>
                    <span className="mx-[5px] h-full w-px bg-[#2a2f3b]" />
                    <Icon>
                        <path d="M1 0v19h19M1 12h7v7" strokeWidth="1.400" />
                    </Icon>
                    <span className="ml-[10px]">
                        <Icon>
                            <circle cx="9" cy="10" r="7.500" />
                            <path d="M9 10h11M9 10l6-8M15 6v8" />
                        </Icon>
                    </span>
                    <span className="ml-[10px]">
                        <Caret wide />
                    </span>
                    <span className="mx-[5px] h-full w-px bg-[#2a2f3b]" />
                    <Icon>
                        <path d="M18 1L1 18h19" />
                        <path d="M7 9l6 5" strokeWidth="2" />
                    </Icon>
                    <span className="ml-[9px]">
                        <Icon>
                            <path d="M4 4h15v15H4z" />
                            <path d="M1 0h6v6H1z" stroke="#e0b860" fill="#3a4051" />
                        </Icon>
                    </span>
                    <span className="ml-[10px]">
                        <Caret wide />
                    </span>
                    <span className="mx-[5px] h-full w-px bg-[#2a2f3b]" />
                    <Icon>
                        <path d="M0 2h20M0 7h20M0 12h20M0 17h20" />
                        <path d="M0 2.500h9M0 7.500h9M0 12.500h9M0 17h11" strokeWidth="3.500" />
                    </Icon>
                </div>
                <span className="ml-[9px] flex h-full w-[31px] items-center justify-center bg-[#3a4051]">
                    <Icon>
                        <path d="M0 2h20M0 10h20M0 18h20" strokeWidth="2.500" />
                    </Icon>
                </span>
            </div>
        </footer>
    );
}

interface Row {
    no?: string;
    text: string;
}

const ROWS: Row[] = [
    { no: '4', text: '执行方式' },
    { text: '绘图菜单 / 构造线' },
    { text: '绘图工具栏 / 构造线' },
    { text: '功能区 / 构造线' },
    { no: '5', text: '特性' },
    { text: '无限长' },
    { no: '6', text: '参数' },
    { text: '随意' },
    { text: '水平' },
    { text: '垂直' },
    { text: '角度' },
    { text: '2等分' },
    { text: '偏移' },
];

function SheetRow({ no, text }: Row) {
    return no ? (
        <tr className="h-[55px] text-xl text-white">
            <td className="border-b border-r border-black bg-[#6a437b] text-center font-medium">{no}</td>
            <td className="border-b border-black bg-[#454a80] pl-[3px]">{text}</td>
        </tr>
    ) : (
        <tr className="h-[55px] text-lg text-black">
            <td className="border-b border-r border-b-[#cfcfcf] border-r-black bg-white" />
            <td className="whitespace-nowrap border-b border-black bg-white pl-[3px]">{text}</td>
        </tr>
    );
}

function Spreadsheet() {
    return (
        <section className="flex w-[291px] shrink-0 flex-col overflow-hidden bg-[#f4f4f5] text-[#333]">
            <div className="flex h-[49px] shrink-0 items-end bg-[#f0f1f4] pt-3">
                <button className="mr-1 flex h-full w-[46px] items-center justify-end overflow-hidden whitespace-nowrap rounded-tr-md bg-[#5b8cff] pr-7 text-white">首页</button>
                <button className="flex h-full grow items-center border-l border-t border-[#d4d6db] bg-[#f6f6f7] pl-[10px] text-[#3f9e49]">
                    <svg width="20" height="20" viewBox="0 0 20 20">
                        <rect width="20" height="20" rx="1" fill="#27c089" />
                        <path d="M14 5H8q-2 0-2 2.500T8 10h4q2 0 2 2.500T12 15H6" stroke="#fff" strokeWidth="2" fill="none" />
                    </svg>
                    <span className="ml-2 whitespace-nowrap">【千秋雪老师CAD教程】.xlsx</span>
                </button>
            </div>
            <div className="flex h-[46px] shrink-0 items-center overflow-hidden whitespace-nowrap">
                <button className="shrink-0">文件</button>
                <span className="ml-3 h-8 w-px shrink-0 bg-[#dedede]" />
                <div className="ml-[9px] flex gap-[8px]">
                    <SheetIcon d="M2 18V4l3-3h10l3 3v14zM5 18v-8h10v8M5 5h9" />
                    <SheetIcon d="M1 5h5M4 2l3 3-3 3M9 3h4a5 5 0 0 1 0 10H5M8 3v11M5 10l-3 3 3 4" />
                    <SheetIcon d="M4 6V1h12v5M4 15H1V6h18v9h-3M5 11h10v8H5z" />
                    <SheetIcon d="M8 18H3V1h13v6M17 19l-4-4M11 8a4 4 0 1 0 .1 0" />
                    <SheetIcon d="M3 2v7h7M3 9c3-5 12-5 12 2 0 4-3 6-7 7" />
                    <SheetIcon d="M5 5l4 5-4 5M11 5l4 5-4 5" />
                </div>
                <span className="ml-2 h-8 w-px shrink-0 bg-[#dedede]" />
                <button className="ml-[6px] h-[26px] w-[34px] shrink-0 rounded-sm bg-[#4fa85a] font-medium text-white">开始</button>
                <button className="ml-[2px] shrink-0">插入</button>
            </div>
            <div className="flex h-[55px] shrink-0 items-center border-t border-[#d9d9d9] bg-[#e7e7e7]">
                <div className="flex h-7 w-[151px] items-center rounded-r-md border border-[#dcdcdc] bg-white pr-[3px]">
                    <input aria-label="名称框" defaultValue="A252" className="w-full min-w-0 pl-[33px] font-['Liberation_Serif'] text-[16px] text-[#555] outline-none" />
                    <svg width="6" height="4" viewBox="0 0 6 4" className="shrink-0">
                        <path d="M0 0h6L3 4z" fill="#888" />
                    </svg>
                </div>
                <svg width="20" height="20" viewBox="0 0 20 20" className="ml-[54px]" fill="none" stroke="#555" strokeWidth="1.400">
                    <circle cx="8.500" cy="8.500" r="7.500" />
                    <path d="M14 14l5 5M5 7h7M5 10h7" />
                </svg>
                <span className="ml-[10px] font-['Open_Sans'] text-xl italic leading-7 text-[#444]">fx</span>
                <input aria-label="编辑栏" className="ml-[9px] h-7 w-0 grow rounded-l-md border border-[#dcdcdc] bg-white" />
            </div>
            <div className="flex h-[27px] shrink-0 bg-[#e9e9e9]">
                <span className="flex w-[57px] items-center justify-center border-b-2 border-r border-b-[#4fa85a] border-r-[#c4c4c4] bg-[#d5d5d5] text-lg leading-5 text-[#4fa85a]">A</span>
            </div>
            <div className="min-h-0 grow overflow-hidden">
                <table className="-mt-6 w-full table-fixed border-separate border-spacing-0">
                    <colgroup>
                        <col className="w-[57px]" />
                        <col />
                    </colgroup>
                    <tbody>
                        {ROWS.map((r) => (
                            <SheetRow key={r.text} {...r} />
                        ))}
                        <tr className="h-[63px] text-2xl text-white">
                            <td colSpan={2} className="border-b border-black bg-[#3e4454] pl-[78px]">
                                【 射线 】
                            </td>
                        </tr>
                        <SheetRow no="1" text="快捷键" />
                    </tbody>
                </table>
            </div>
            <div className="flex h-[27px] shrink-0 items-center whitespace-nowrap bg-[#ebebeb] text-[#666]">
                <div className="flex w-[104px] shrink-0 items-center gap-4 pl-1">
                    <SheetIcon d="M12 3l-7 7 7 7" small />
                    <SheetIcon d="M7 3l7 7-7 7" small />
                    <SheetIcon d="M4 3l7 7-7 7M16 3v14" small />
                </div>
                <button className="h-full w-[112px] shrink-0 bg-[#cdcdcd]">1 基本设置</button>
                <button className="h-full grow bg-white pl-1 font-bold text-[#43a34d]">2 绘图</button>
            </div>
            <div className="h-[34px] shrink-0 border-t border-[#dedede] bg-[#f3f3f3]" />
        </section>
    );
}

function SheetIcon({ d, small = false }: { d: string; small?: boolean }) {
    const s = small ? 17 : 21;
    return (
        <svg width={s} height={s} viewBox="0 0 20 20" fill="none" stroke="#555" strokeWidth="1.400" className="shrink-0">
            <path d={d} />
        </svg>
    );
}

function Taskbar() {
    return (
        <footer className="relative flex h-[50px] shrink-0 bg-linear-to-r from-[#27404a] via-[#20333f] to-[#1a2643] text-white">
            <button aria-label="开始" className="flex w-[61px] items-center justify-center pt-1">
                <svg width="21" height="21" viewBox="0 0 21 21" fill="#fff">
                    <path d="M0 3l9-1.300V10H0zM10 1.500L21 0v10H10zM0 11h9v8.300L0 18zM10 11h11v10l-11-1.500z" />
                </svg>
            </button>
            <div className="flex gap-[11px] pl-2">
                <button aria-label="Camtasia" className="flex h-full w-[51px] items-center justify-center border-b-[3px] border-[#7ab8e8]">
                    <svg width="30" height="30" viewBox="0 0 30 30">
                        <rect width="30" height="30" rx="2" fill="#4fae12" />
                        <path d="M24 8V5H10L6 9v12l4 4h14v-3" stroke="#fff" strokeWidth="4" fill="none" />
                    </svg>
                </button>
                <button aria-label="Recorder" className="flex h-full w-[51px] items-center justify-center border-b-[3px] border-[#7ab8e8]">
                    <svg width="30" height="30" viewBox="0 0 30 30">
                        <rect width="30" height="30" rx="2" fill="#f4553c" />
                        <path d="M24 8V5H10L6 9v12l4 4h14v-3" stroke="#fff" strokeWidth="4" fill="none" />
                    </svg>
                </button>
                <button aria-label="WPS" className="flex h-full w-[51px] items-center justify-center border-b-[3px] border-[#7ab8e8]">
                    <svg width="27" height="28" viewBox="0 0 27 28">
                        <rect width="27" height="28" rx="3" fill="#2f86f6" />
                        <path d="M5 9h6l2 10M5 9l4 10 5-10 3 10 5-10h-6" stroke="#fff" strokeWidth="1.800" fill="none" />
                    </svg>
                </button>
            </div>
            <button aria-label="AutoCAD" className="ml-[6px] flex h-full w-[61px] items-center justify-center border-b-[3px] border-[#8cc4f0] bg-[#52666d]">
                <svg width="30" height="30" viewBox="0 0 30 30">
                    <rect width="30" height="30" fill="#f4ecea" />
                    <path d="M4 27L12 3h7l7 24h-5l-2-7h-8l-2 7zM12.500 15h5L15 7z" fill="#b8232c" />
                </svg>
            </button>
            <div className="pointer-events-none absolute left-[11px] top-0 flex items-center opacity-40">
                <svg width="39" height="39" viewBox="0 0 39 39">
                    <rect width="39" height="39" rx="5" fill="#b4babd" />
                    <path d="M6 15c0-6 7-9 12-6 6-2 12 2 10 6 4 3 0 7-4 5-7 3-18 2-18-5zM12 26h22v6H12z" fill="#2a3a40" />
                </svg>
                <span className="ml-2 font-['DejaVu_Sans'] text-[33px] font-bold leading-[40px]">tafe.cc</span>
            </div>
            <div className="ml-auto flex items-center">
                <svg width="16" height="9" viewBox="0 0 16 9" fill="none" stroke="#fff" strokeWidth="1.400">
                    <path d="M1 8l7-7 7 7" />
                </svg>
                <svg width="14" height="20" viewBox="0 0 14 20" className="ml-[14px]" fill="#fff">
                    <rect x="3" width="8" height="14" rx="1" />
                    <path d="M1 12v4h12v-4M7 16v3M3 19.300h8" stroke="#fff" strokeWidth="1.300" fill="none" />
                </svg>
                <svg width="20" height="20" viewBox="0 0 20 20" className="ml-[13px]">
                    <path d="M10 0c3 2 6 2 10 2 0 9-2 14-10 18C2 16 0 11 0 2c4 0 7 0 10-2z" fill="#dbe8ff" />
                    <path d="M10 2c3 1 5 2 8 2 0 7-2 11-8 14-6-3-8-7-8-14 3 0 5-1 8-2z" fill="#3b7df0" />
                    <path d="M5 7l5 4 5-4v3l-5 4-5-4z" fill="#fff" />
                </svg>
                <svg width="20" height="18" viewBox="0 0 20 18" className="ml-[10px]" fill="none" stroke="#fff" strokeWidth="1.200">
                    <path d="M6 3h13v11H3V7M11 14v3M6 17.300h10M1 1h4v4H1zM3 5v3" />
                </svg>
                <svg width="20" height="16" viewBox="0 0 20 16" className="ml-[10px]" fill="none" stroke="#fff" strokeWidth="1.200">
                    <path d="M1 5h3l5-4v14l-5-4H1zM12 6q1 2 0 4" />
                    <path d="M14 4q3 4 0 8M17 2q4 6 0 12" opacity="0.600" />
                </svg>
                <span className="ml-3 leading-5">ENG</span>
                <button aria-label="通知" className="relative ml-[22px]">
                    <svg width="20" height="20" viewBox="0 0 20 20">
                        <path d="M0 0h20v16h-9l-4 4v-4H0z" fill="#fff" />
                        <path d="M4 4h12M4 8h12M4 12h8" stroke="#1b2a42" strokeWidth="1.300" />
                    </svg>
                    <span className="absolute left-[9px] top-[9px] flex h-5 w-5 items-center justify-center rounded-full border border-[#8a909c] bg-[#2c3444] text-sm font-bold">2</span>
                </button>
                <span className="ml-[26px] mr-1 h-[50px] w-px bg-[#5a6274]" />
            </div>
        </footer>
    );
}

export default function App() {
    return (
        <div className="flex h-screen flex-col overflow-hidden font-['Open_Sans','Noto_Sans_CJK_SC',sans-serif] text-[15px] leading-5">
            <div className="flex min-h-0 grow">
                <div className="flex min-w-0 grow flex-col border border-t-2 border-[#1b87b3] bg-[#212733]">
                    <TitleBar />
                    <MenuBar />
                    <RibbonTabs />
                    <Ribbon />
                    <FileTabs />
                    <div className="flex min-h-0 grow">
                        <SideToolbar />
                        <Canvas />
                        <div className="w-[3px] shrink-0 bg-[#2a303c]" />
                    </div>
                    <StatusBar />
                </div>
                <Spreadsheet />
            </div>
            <Taskbar />
        </div>
    );
}
